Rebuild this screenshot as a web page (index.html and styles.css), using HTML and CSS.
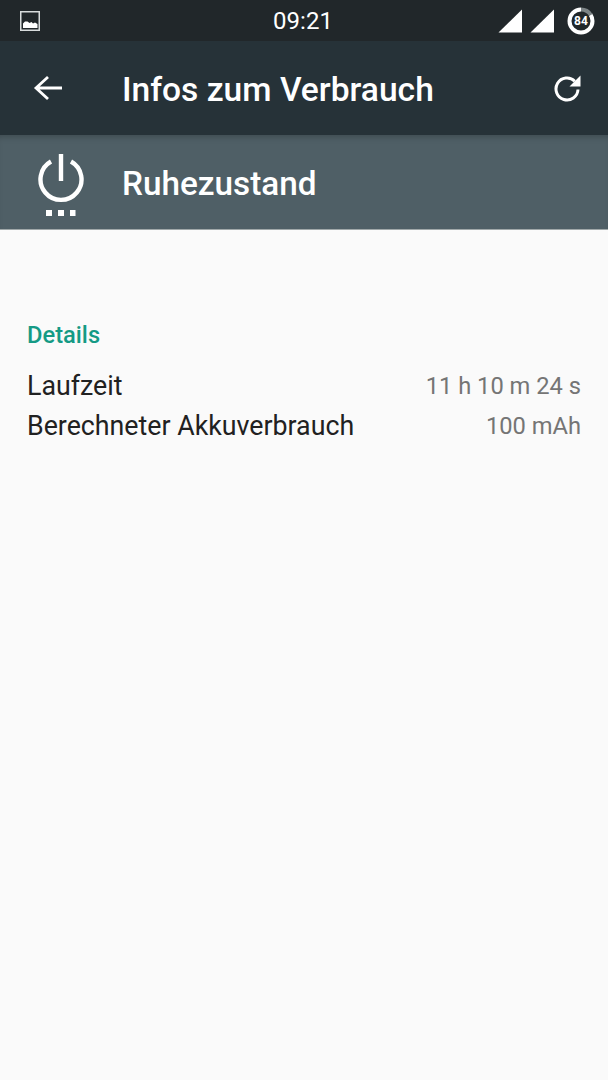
FILE: index.html
```html
<!DOCTYPE html>
<html lang="de">
<head>
<meta charset="utf-8">
<title>Infos zum Verbrauch</title>
<link rel="stylesheet" href="styles.css">
</head>
<body>
<header class="status">
  <div class="status-left">
    <svg class="ic-photo" width="20" height="20" viewBox="0 0 20 20"><rect x="0.75" y="0.75" width="18.5" height="18.5" fill="none" stroke="#d8dcdc" stroke-width="1.5"/><path d="M3 17V12.5L5 10.5L7.5 10.5L9.5 12L11.5 11L13 12.5L15 11.5L17.5 13V17Z" fill="#fff"/></svg>
  </div>
  <div class="clock">09:21</div>
  <div class="status-right">
    <svg width="24" height="24" viewBox="0 0 24 24"><path d="M0.5 23.5L24 0.5V23.5Z" fill="#fff"/></svg>
    <svg width="24" height="24" viewBox="0 0 24 24"><path d="M0.5 23.5L24 0.5V23.5Z" fill="#fff"/></svg>
    <div class="battery">
      <svg width="28" height="28" viewBox="0 0 28 28"><circle cx="14" cy="14" r="11.5" fill="none" stroke="#fff" stroke-width="4" stroke-dasharray="60.7 72.3" transform="rotate(-90 14 14) scale(1 -1) translate(0 -28)"/><circle cx="14" cy="14" r="11.5" fill="none" stroke="#7d8486" stroke-width="4" stroke-dasharray="11.6 72.3" transform="rotate(-90 14 14)"/></svg>
      <span class="battery-level">84</span>
    </div>
  </div>
</header>
<div class="toolbar">
  <svg class="ic-back" width="30" height="26" viewBox="0 0 30 26"><path d="M15 2L3 13L15 24M3 13H29" fill="none" stroke="#fff" stroke-width="2.8"/></svg>
  <h1 class="toolbar-title">Infos zum Verbrauch</h1>
  <svg class="ic-refresh" width="28" height="28" viewBox="0 0 28 28"><path d="M21.8 7.2A11 11 0 1 0 25 15.5" fill="none" stroke="#fff" stroke-width="3"/><path d="M27.5 1.5V12.5H16.5Z" fill="#fff"/></svg>
</div>
<div class="item-head">
  <svg class="ic-power" width="46" height="64" viewBox="0 0 46 64"><path d="M13 7.5A20.5 20.5 0 1 0 33 7.5" fill="none" stroke="#fff" stroke-width="4.4"/><path d="M23 0V27" stroke="#fff" stroke-width="4.4"/><path d="M8 56h6v6h-6zM20 56h6v6h-6zM32 56h5.500v6h-5.500z" fill="#fff"/></svg>
  <h2 class="item-title">Ruhezustand</h2>
</div>
<main class="details">
  <h3 class="section-label">Details</h3>
  <div class="row row-first"><span class="row-name">Laufzeit</span><span class="row-value">11 h 10 m 24 s</span></div>
  <div class="row"><span class="row-name">Berechneter Akkuverbrauch</span><span class="row-value">100 mAh</span></div>
</main>
</body>
</html>
```
FILE: styles.css
```css
* { box-sizing: border-box; }
html, body { margin: 0; height: 100%; }
body {
  width: 608px;
  height: 1080px;
  overflow: hidden;
  background: #fafafa;
  font-family: Roboto, "Noto Sans", sans-serif;
  display: flex;
  flex-direction: column;
}
h1, h2, h3 { margin: 0; font-weight: 500; }

.status {
  height: 41px;
  background: #21272a;
  display: grid;
  grid-template-columns: 1fr auto 1fr;
  align-items: center;
  padding: 0 13px 0 11px;
}
.status-left { display: flex; padding-left: 9px; }
.clock { color: #fff; font-size: 24px; line-height: 41px; padding-top: 1px; }
.status-right { display: flex; justify-content: flex-end; align-items: center; gap: 8px; }
.status-right > svg { margin-top: -1px; }
.battery { position: relative; width: 28px; height: 28px; margin-left: 5px; }
.battery svg { display: block; }
.battery-level {
  position: absolute;
  inset: 0;
  display: flex;
  align-items: center;
  justify-content: center;
  color: #fff;
  font-size: 12px;
  font-weight: 700;
}

.toolbar {
  height: 94px;
  background: #263238;
  display: flex;
  align-items: center;
  padding: 0 27px 0 33px;
}
.ic-back { flex: none; }
.toolbar-title { color: #fff; font-size: 33.6px; line-height: 40px; margin: 4px 0 0 59px; flex: 1; }
.ic-refresh { flex: none; }

.item-head {
  height: 95px;
  background: #4f5f66;
  display: flex;
  align-items: center;
  padding-left: 38px;
  border-bottom: 1px solid #a0a8a9;
  box-shadow: inset 0 6px 6px -4px rgba(0, 0, 0, 0.22);
}
.ic-power { flex: none; margin-top: 8px; }
.item-title { color: #fff; font-size: 33.3px; line-height: 40px; margin: 4px 0 0 38px; }

.details { padding: 92px 27px 0 27px; }
.section-label { color: #159a85; font-size: 23.7px; line-height: 26px; }
.row { display: flex; justify-content: space-between; align-items: center; height: 40px; }
.row-first { margin-top: 18px; }
.row-name { color: #212121; font-size: 26.75px; }
.row-value { color: #757575; font-size: 23.7px; }
```
